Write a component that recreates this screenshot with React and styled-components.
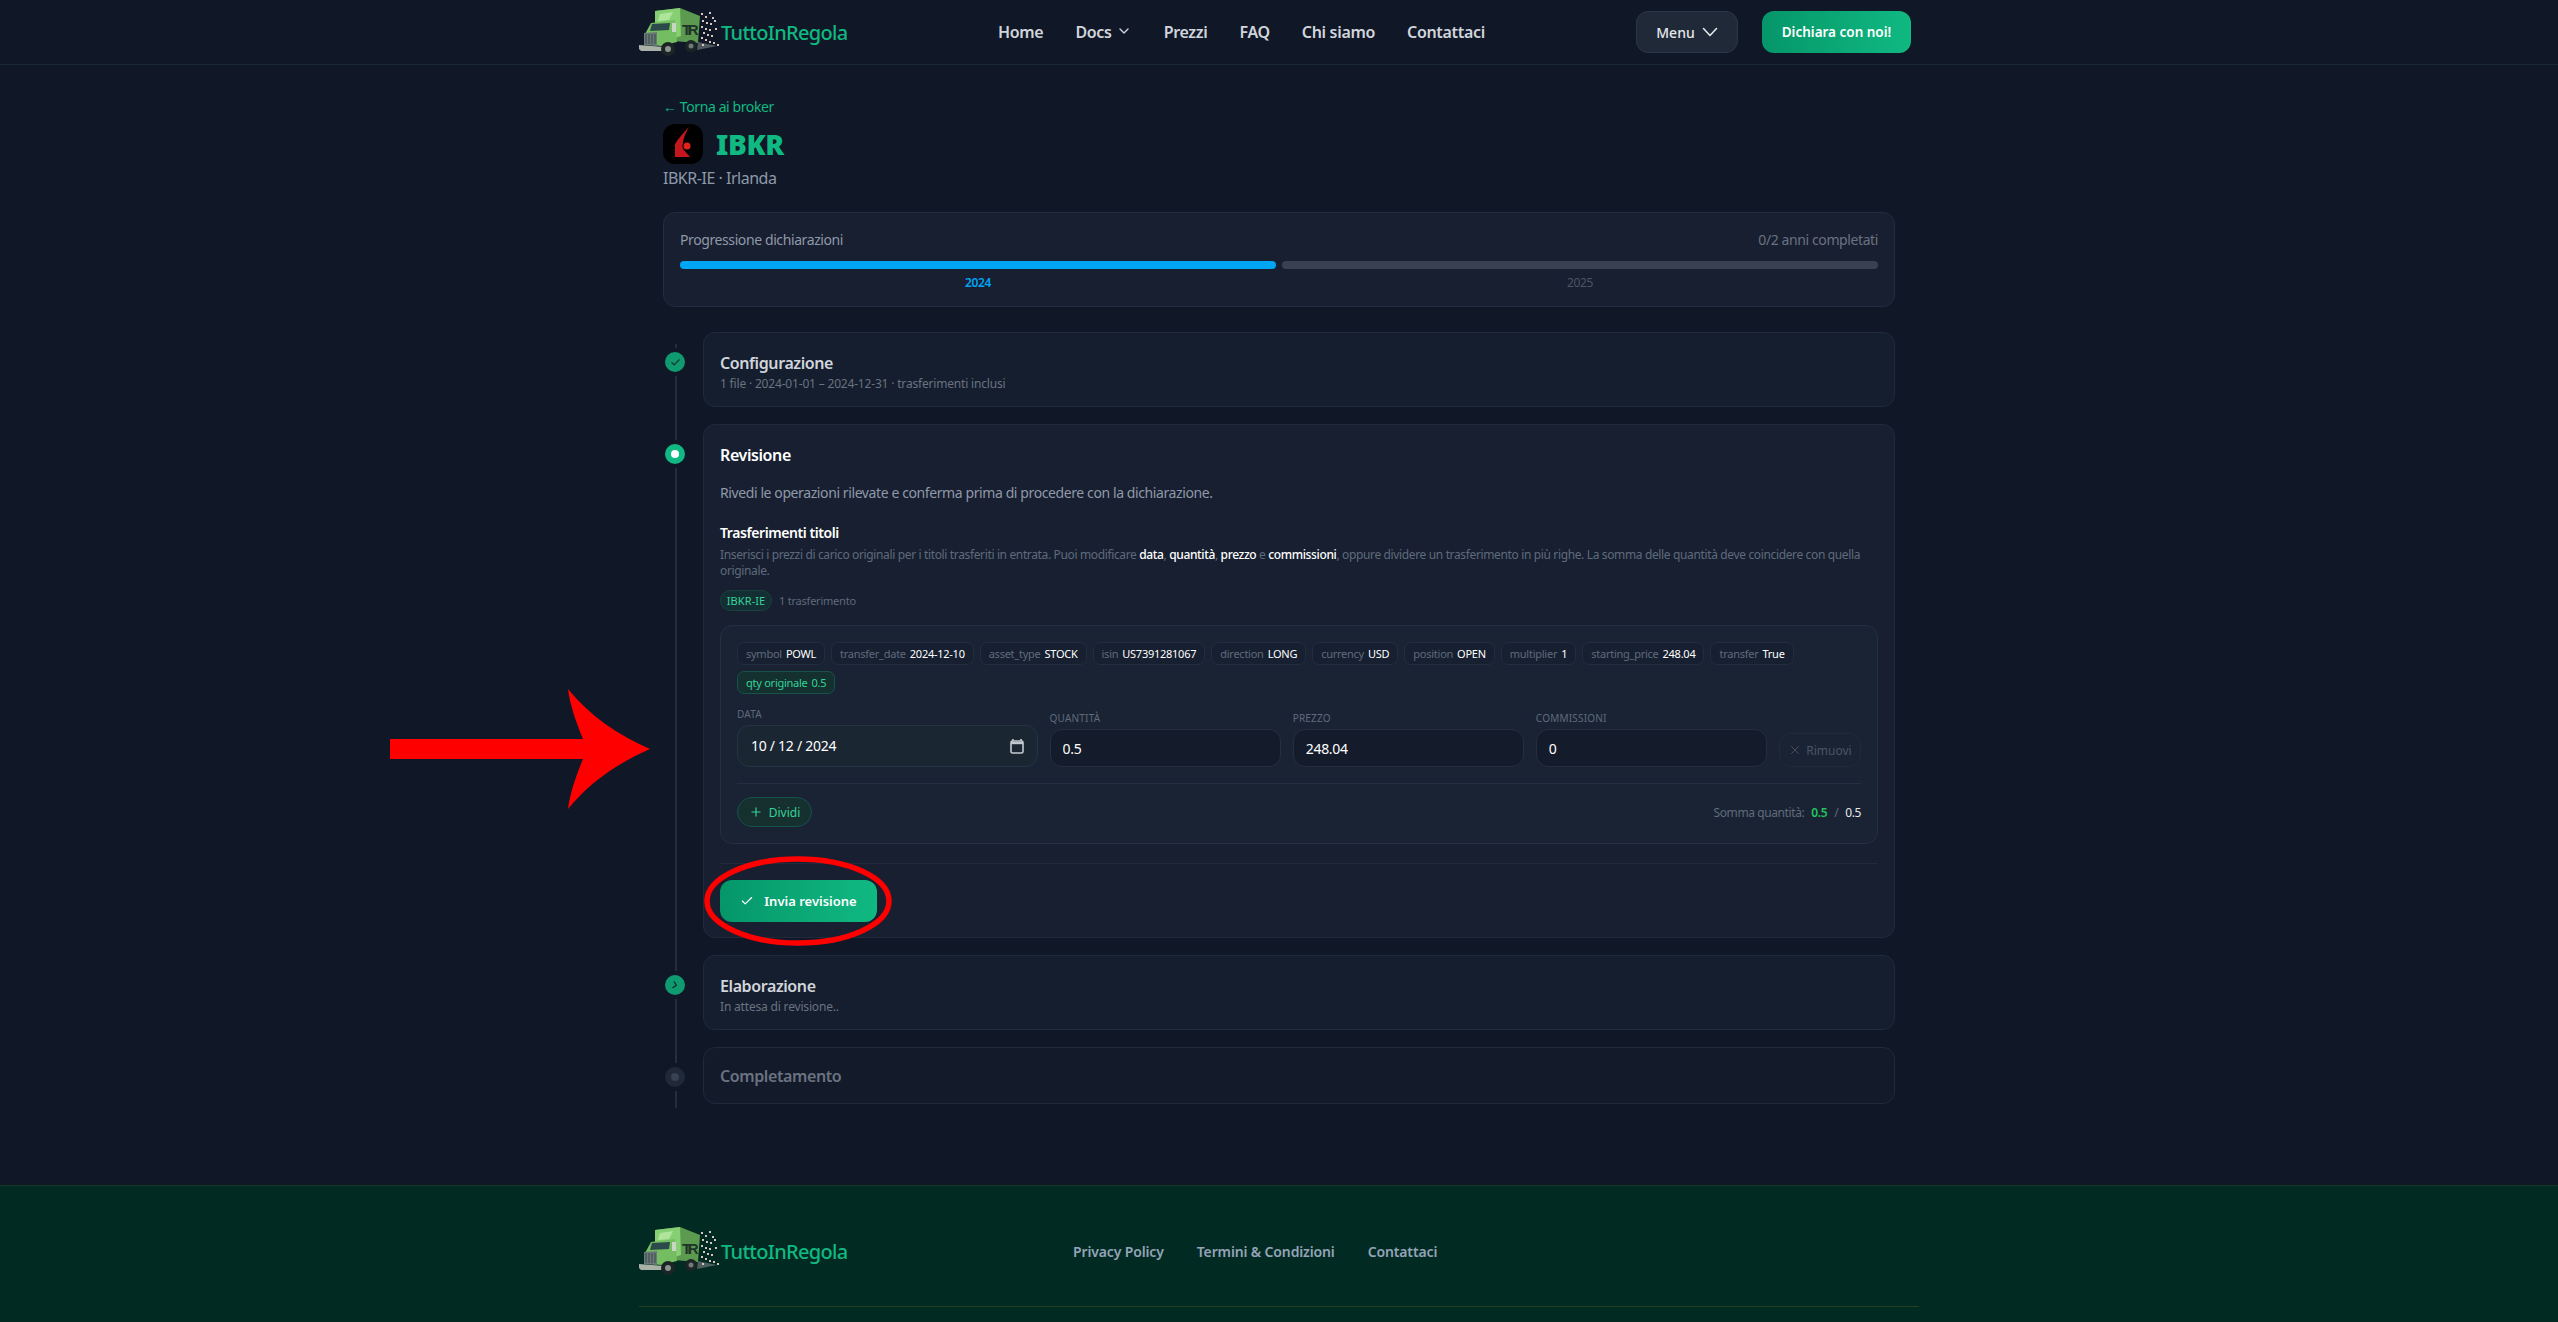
import styled, { createGlobalStyle } from "styled-components";
import { Check, ChevronDown, ChevronRight, Plus, X } from "lucide-react";

const Global = createGlobalStyle`
    * { box-sizing: border-box; }
    html, body { margin: 0; padding: 0; background: #101828; }
    body {
        font-family: "Noto Sans", "Open Sans", sans-serif;
        color: #e5e7eb;
        letter-spacing: -0.025em;
        overflow-x: hidden;
    }
    #root { position: relative; }
`;

const Header = styled.header`
    height: 65px;
    border-bottom: 1px solid #1b2838;
    background: #101828;
`;

const Bar = styled.div`
    width: 1280px;
    height: 64px;
    margin: 0 auto;
    display: flex;
    align-items: center;
    padding-right: 8px;
`;

const LogoLink = styled.a`
    display: flex;
    align-items: center;
    width: 210px;
    font-size: 20px;
    font-weight: 500;
    color: #10b981;
    letter-spacing: -0.035em;

    svg { flex-shrink: 0; }
`;

const Nav = styled.nav`
    display: flex;
    align-items: center;
    gap: 32px;
    margin-left: 149px;
`;

const NavItem = styled.a`
    display: flex;
    align-items: center;
    gap: 4px;
    font-size: 16px;
    font-weight: 600;
    color: #d1d5db;
    letter-spacing: -0.02em;

    svg { margin-top: -3px; }
`;

const Actions = styled.div`
    display: flex;
    gap: 24px;
    margin-left: auto;
`;

const MenuButton = styled.button`
    display: flex;
    align-items: center;
    justify-content: center;
    gap: 7px;
    width: 102px;
    height: 42px;
    font: inherit;
    font-size: 14px;
    font-weight: 500;
    color: #e5e7eb;
    background: #1f2937;
    border: 1px solid #2a3648;
    border-radius: 12px;
`;

const PrimaryButton = styled.button`
    display: flex;
    align-items: center;
    justify-content: center;
    gap: 10px;
    width: ${({ $width = 149 }) => $width}px;
    height: 42px;
    font: inherit;
    font-size: ${({ $size = 13.5 }) => $size}px;
    font-weight: 600;
    color: #fff;
    background: linear-gradient(90deg, #059669, #10b981);
    border: none;
    border-radius: 12px;
`;

const Main = styled.main`
    width: 1280px;
    margin: 0 auto;
    padding: 32px 24px 81px;
`;

const BackLink = styled.a`
    display: block;
    font-size: 14px;
    line-height: 20px;
    color: #10b981;
`;

const Title = styled.div`
    display: flex;
    align-items: center;
    gap: 13px;
    margin-top: 7px;
`;

const BrokerName = styled.h1`
    margin: 0;
    font-size: 28px;
    line-height: 40px;
    font-weight: 900;
    color: #10b981;
`;

const SubTitle = styled.p`
    margin: 4px 0 0;
    font-size: 16px;
    line-height: 20px;
    letter-spacing: -0.03em;
    color: #8f99a8;
`;

const ProgressCard = styled.section`
    height: 95px;
    margin-top: 24px;
    padding: 17px 16px 0;
    background: #171f30;
    border: 1px solid #222d3f;
    border-radius: 12px;
`;

const ProgressHead = styled.div`
    display: flex;
    justify-content: space-between;
    font-size: 14px;
    line-height: 20px;
    color: #8f99a8;
`;

const Faint = styled.span`
    color: #6b7280;
`;

const Years = styled.div`
    display: grid;
    grid-template-columns: 1fr 1fr;
    gap: 6px;
    margin-top: 11px;
`;

const Year = styled.div`
    text-align: center;
    font-size: 12px;
    line-height: 16px;
    font-weight: ${({ $active }) => ($active ? 600 : 400)};
    color: ${({ $active }) => ($active ? "#00a6f4" : "#4b5563")};

    &::before {
        content: "";
        display: block;
        height: 8px;
        margin-bottom: 6px;
        border-radius: 4px;
        background: ${({ $active }) => ($active ? "#00a6f4" : "#374151")};
    }
`;

const Steps = styled.div`
    position: relative;
    display: flex;
    flex-direction: column;
    gap: 17px;
    margin-top: 25px;

    &::before {
        content: "";
        position: absolute;
        top: 12px;
        bottom: -4px;
        left: 12px;
        width: 2px;
        background: #232e3f;
    }
`;

const Step = styled.div`
    position: relative;
    display: grid;
    grid-template-columns: 40px 1fr;
`;

const Dot = styled.div`
    width: 20px;
    height: 20px;
    margin: 20px 0 0 2px;
    display: flex;
    align-items: center;
    justify-content: center;
    border-radius: 50%;
    background: ${({ $state }) => ({ done: "#0f9a70", active: "#10b981", idle: "#1f2937" }[$state])};
    color: #14302f;
    box-shadow: 0 0 0 4px #101828;
`;

const DotCore = styled.span`
    width: 8px;
    height: 8px;
    border-radius: 50%;
    background: ${({ $state }) => ($state === "active" ? "#fff" : "#374151")};
`;

const StepCard = styled.section`
    padding: ${({ $pad = "18px 16px 13px" }) => $pad};
    background: ${({ $state }) => ({ active: "#171f30", idle: "#131b2b" }[$state] || "#141e2e")};
    border: 1px solid #1f2a3b;
    border-radius: 12px;
`;

const StepTitle = styled.h2`
    margin: 0;
    font-size: 16px;
    line-height: 24px;
    font-weight: 600;
    color: ${({ $state }) => ({ active: "#fff", idle: "#6b7280" }[$state] || "#d1d5db")};
`;

const StepNote = styled.p`
    margin: 0;
    font-size: 12px;
    line-height: 18px;
    letter-spacing: -0.015em;
    color: #6b7280;
`;

const Lead = styled.p`
    margin: 16px 0 0;
    font-size: 14px;
    line-height: 20px;
    color: #8f99a8;
`;

const SectionTitle = styled.h3`
    margin: 20px 0 0;
    font-size: 14px;
    line-height: 20px;
    font-weight: 600;
    letter-spacing: -0.03em;
    color: #fff;
`;

const Help = styled.p`
    margin: 4px 0 0;
    font-size: 12px;
    line-height: 16px;
    letter-spacing: -0.03em;
    color: #5f6b7c;

    strong {
        font-weight: 500;
        color: #fff;
    }
`;

const BrokerRow = styled.div`
    display: flex;
    align-items: center;
    gap: 7px;
    margin-top: 11px;
    font-size: 11px;
    letter-spacing: -0.02em;
    color: #5f6b7c;
`;

const BrokerPill = styled.span`
    display: flex;
    align-items: center;
    justify-content: center;
    width: 52px;
    height: 21px;
    font-size: 11px;
    letter-spacing: 0.01em;
    color: #34d399;
    background: #132f33;
    border: 1px solid #17433f;
    border-radius: 11px;
`;

const TransferCard = styled.div`
    margin-top: 14px;
    padding: 16px;
    background: #192333;
    border: 1px solid #243041;
    border-radius: 12px;
`;

const Chips = styled.div`
    display: flex;
    flex-wrap: wrap;
    gap: 6px;
`;

const Chip = styled.span`
    display: flex;
    align-items: center;
    gap: 4px;
    height: 23px;
    padding: 0 8px;
    font-size: 11px;
    letter-spacing: -0.023em;
    color: ${({ $accent }) => ($accent ? "#34d399" : "#5f6b7c")};
    background: ${({ $accent }) => ($accent ? "#14302f" : "#172030")};
    border: 1px solid ${({ $accent }) => ($accent ? "#17524a" : "#222d3f")};
    border-radius: 7px;

    b {
        font-weight: 400;
        color: ${({ $accent }) => ($accent ? "#34d399" : "#fff")};
    }
`;

const Fields = styled.div`
    display: grid;
    grid-template-columns: 1.3fr 1fr 1fr 1fr auto;
    gap: 12px;
    align-items: end;
    margin-top: 13px;
    padding-bottom: 16px;
    border-bottom: 1px solid #243041;
`;

const Field = styled.label`
    display: flex;
    flex-direction: column;
    gap: 4px;
    font-size: 10px;
    line-height: 14px;
    letter-spacing: 0.02em;
    color: #5f6b7c;
`;

const Input = styled.input`
    width: 100%;
    height: 38px;
    padding: 0 12px;
    font: inherit;
    font-size: 14px;
    letter-spacing: -0.02em;
    color: #fff;
    background: #141b2b;
    border: 1px solid #243041;
    border-radius: 12px;
    outline: none;
`;

const DateBox = styled.div`
    display: flex;
    align-items: center;
    justify-content: space-between;
    height: 42px;
    padding: 0 13px;
    font-size: 14px;
    letter-spacing: -0.02em;
    color: #fff;
    background: #1b2633;
    border: 1px solid #263344;
    border-radius: 12px;
`;

const RemoveButton = styled.button`
    display: flex;
    align-items: center;
    justify-content: center;
    gap: 4px;
    width: 82px;
    height: 34px;
    font: inherit;
    font-size: 12px;
    color: #4b5563;
    background: transparent;
    border: 1px solid #1f2a3a;
    border-radius: 12px;
`;

const TransferFoot = styled.div`
    display: flex;
    align-items: center;
    justify-content: space-between;
    margin-top: 13px;
`;

const SplitButton = styled.button`
    display: flex;
    align-items: center;
    justify-content: center;
    gap: 6px;
    width: 75px;
    height: 30px;
    font: inherit;
    font-size: 12px;
    color: #34d399;
    background: #16302f;
    border: 1px solid #17524a;
    border-radius: 15px;
`;

const Sum = styled.div`
    display: flex;
    gap: 7px;
    font-size: 12px;
    color: #5f6b7c;
`;

const SumValue = styled.span`
    font-weight: ${({ $ok }) => ($ok ? 600 : 400)};
    color: ${({ $ok }) => ($ok ? "#22c55e" : "#e5e7eb")};
`;

const Submit = styled.div`
    margin-top: 19px;
    padding-top: 16px;
    border-top: 1px solid #1f2a3b;
`;

const WorkIcon = styled(ChevronRight)`
    transform: rotate(12deg);
`;

const Footer = styled.footer`
    height: 137px;
    background: #012b22;
    border-top: 1px solid #123a26;
`;

const FooterInner = styled.div`
    width: 1280px;
    margin: 0 auto;
    padding-top: 40px;
`;

const FooterRow = styled.div`
    display: flex;
    align-items: center;
    height: 50px;
    margin-bottom: 30px;
`;

const FooterLinks = styled.div`
    display: flex;
    gap: 33px;
    margin-left: 224px;
`;

const FooterLink = styled.a`
    font-size: 14px;
    font-weight: 600;
    letter-spacing: -0.01em;
    color: #94a3b8;
`;

const FooterRule = styled.div`
    height: 1px;
    background: #24401f;
`;

const Mark = styled.svg`
    position: absolute;
    left: 0;
    top: 0;
    pointer-events: none;
`;

const chips = [
    ["symbol", "POWL"],
    ["transfer_date", "2024-12-10"],
    ["asset_type", "STOCK"],
    ["isin", "US7391281067"],
    ["direction", "LONG"],
    ["currency", "USD"],
    ["position", "OPEN"],
    ["multiplier", "1"],
    ["starting_price", "248.04"],
    ["transfer", "True"],
];

const specks = [
    [62, 5], [66, 8], [70, 4], [73, 9], [63, 12], [67, 14], [71, 15], [75, 12], [62, 18], [66, 20],
    [70, 21], [64, 24], [68, 26], [72, 27], [76, 20], [62, 29], [66, 31], [70, 33], [74, 34], [78, 36], [63, 36],
];

function Truck() {
    return (
        <svg width="82" height="48" viewBox="0 0 82 48">
            <path d="M16 3 41 0 61 8 59 35 34 33 16 20Z" fill="#5c9a50" />
            <path d="M16 3 41 0 42 28 33 31 16 20Z" fill="#86cf72" />
            <path d="M21 6 34 4 30 12 19 13Z" fill="#aee59b" />
            <text x="43" y="27" fontFamily="Liberation Sans, sans-serif" fontWeight="700" fontSize="15" fill="#1e3528" textLength="16">TIR</text>
            <path d="M12 15 36 12 38 34 22 38 6 36 6 26Z" fill="#74bd60" />
            <path d="M13 16 31 15 30 22 11 23Z" fill="#2c4a4c" />
            <rect x="33" y="15" width="4" height="9" fill="#c9d6c4" />
            <path d="M5 25 18 24 18 38 5 37Z" fill="#6b7a78" />
            <path d="M7 26V36M10 26V36M13 26V36M16 26V36" stroke="#39474a" strokeWidth="1" />
            <path d="M0 37 26 39 26 43 2 43 0 41Z" fill="#aab2a8" />
            <circle cx="29" cy="41" r="7" fill="#1d2426" />
            <circle cx="29" cy="41" r="3" fill="#8a948f" />
            <circle cx="52" cy="38" r="6" fill="#1d2426" />
            <circle cx="52" cy="38" r="2.5" fill="#6f7975" />
            <path d="M59 34 78 38 58 42Z" fill="#6d7678" opacity=".7" />
            {specks.map(([x, y]) => (
                <rect key={`${x}-${y}`} x={x} y={y} width="2" height="2" fill="#d8c6bd" />
            ))}
        </svg>
    );
}

function Logo() {
    return (
        <LogoLink>
            <Truck />
            <span>TuttoInRegola</span>
        </LogoLink>
    );
}

export default function App() {
    return (
        <>
            <Global />
            <Header>
                <Bar>
                    <Logo />
                    <Nav>
                        <NavItem>Home</NavItem>
                        <NavItem>Docs <ChevronDown size={16} strokeWidth={2} /></NavItem>
                        <NavItem>Prezzi</NavItem>
                        <NavItem>FAQ</NavItem>
                        <NavItem>Chi siamo</NavItem>
                        <NavItem>Contattaci</NavItem>
                    </Nav>
                    <Actions>
                        <MenuButton>
                            Menu
                            <svg width="16" height="10" viewBox="0 0 16 10" fill="none" stroke="currentColor" strokeWidth="1.6" strokeLinecap="round" strokeLinejoin="round">
                                <path d="M1.5 1.5 8 8.5l6.5-7" />
                            </svg>
                        </MenuButton>
                        <PrimaryButton>Dichiara con noi!</PrimaryButton>
                    </Actions>
                </Bar>
            </Header>

            <Main>
                <BackLink>← Torna ai broker</BackLink>
                <Title>
                    <svg width="40" height="40" viewBox="0 0 40 40">
                        <rect width="40" height="40" rx="12" fill="#000" />
                        <path d="M26 3C20 9 15 15 12 20V33H27L20 25C19 17 22 10 26 3Z" fill="#c4161c" />
                        <circle cx="24" cy="22" r="4.5" fill="#000" />
                        <circle cx="24" cy="22" r="3.5" fill="#e2231a" />
                    </svg>
                    <BrokerName>IBKR</BrokerName>
                </Title>
                <SubTitle>IBKR-IE · Irlanda</SubTitle>

                <ProgressCard>
                    <ProgressHead>
                        <span>Progressione dichiarazioni</span>
                        <Faint>0/2 anni completati</Faint>
                    </ProgressHead>
                    <Years>
                        <Year $active>2024</Year>
                        <Year>2025</Year>
                    </Years>
                </ProgressCard>

                <Steps>
                    <Step>
                        <Dot $state="done"><Check size={11} strokeWidth={2.5} /></Dot>
                        <StepCard $state="done">
                            <StepTitle>Configurazione</StepTitle>
                            <StepNote>1 file · 2024-01-01 – 2024-12-31 · trasferimenti inclusi</StepNote>
                        </StepCard>
                    </Step>

                    <Step>
                        <Dot $state="active"><DotCore $state="active" /></Dot>
                        <StepCard $state="active" $pad="18px 16px 15px">
                            <StepTitle $state="active">Revisione</StepTitle>
                            <Lead>Rivedi le operazioni rilevate e conferma prima di procedere con la dichiarazione.</Lead>
                            <SectionTitle>Trasferimenti titoli</SectionTitle>
                            <Help>
                                Inserisci i prezzi di carico originali per i titoli trasferiti in entrata. Puoi modificare <strong>data</strong>, <strong>quantità</strong>, <strong>prezzo</strong> e <strong>commissioni</strong>, oppure dividere un trasferimento in più righe. La somma delle quantità deve coincidere con quella<br />originale.
                            </Help>
                            <BrokerRow>
                                <BrokerPill>IBKR-IE</BrokerPill>
                                <span>1 trasferimento</span>
                            </BrokerRow>
                            <TransferCard>
                                <Chips>
                                    {chips.map(([label, value]) => (
                                        <Chip key={label}>{label} <b>{value}</b></Chip>
                                    ))}
                                    <Chip $accent>qty originale <b>0.5</b></Chip>
                                </Chips>
                                <Fields>
                                    <Field>
                                        DATA
                                        <DateBox>
                                            10 / 12 / 2024
                                            <svg width="14" height="16" viewBox="0 0 14 16">
                                                <path d="M3 1V3M11 1V3" stroke="#c4c9d0" strokeWidth="1.6" />
                                                <rect x="1" y="3" width="12" height="12" rx="1.5" fill="none" stroke="#c4c9d0" strokeWidth="1.6" />
                                                <path d="M1 5H13" stroke="#c4c9d0" strokeWidth="2.4" />
                                            </svg>
                                        </DateBox>
                                    </Field>
                                    <Field>QUANTITÀ<Input readOnly value="0.5" /></Field>
                                    <Field>PREZZO<Input readOnly value="248.04" /></Field>
                                    <Field>COMMISSIONI<Input readOnly value="0" /></Field>
                                    <RemoveButton><X size={14} strokeWidth={1.5} /> Rimuovi</RemoveButton>
                                </Fields>
                                <TransferFoot>
                                    <SplitButton><Plus size={14} /> Dividi</SplitButton>
                                    <Sum>
                                        Somma quantità:
                                        <SumValue $ok>0.5</SumValue>
                                        <span>/</span>
                                        <SumValue>0.5</SumValue>
                                    </Sum>
                                </TransferFoot>
                            </TransferCard>
                            <Submit>
                                <PrimaryButton $width={157} $size={13}><Check size={14} /> Invia revisione</PrimaryButton>
                            </Submit>
                        </StepCard>
                    </Step>

                    <Step>
                        <Dot $state="done"><WorkIcon size={12} strokeWidth={2.5} /></Dot>
                        <StepCard $state="done">
                            <StepTitle>Elaborazione</StepTitle>
                            <StepNote>In attesa di revisione..</StepNote>
                        </StepCard>
                    </Step>

                    <Step>
                        <Dot $state="idle"><DotCore /></Dot>
                        <StepCard $state="idle" $pad="16px 16px 15px">
                            <StepTitle $state="idle">Completamento</StepTitle>
                        </StepCard>
                    </Step>
                </Steps>
            </Main>

            <Footer>
                <FooterInner>
                    <FooterRow>
                        <Logo />
                        <FooterLinks>
                            <FooterLink>Privacy Policy</FooterLink>
                            <FooterLink>Termini &amp; Condizioni</FooterLink>
                            <FooterLink>Contattaci</FooterLink>
                        </FooterLinks>
                    </FooterRow>
                    <FooterRule />
                </FooterInner>
            </Footer>

            {/* annotation marks drawn on top of the screenshot */}
            <Mark width="2558" height="1322" viewBox="0 0 2558 1322">
                <path d="M390 739H583C576 722 570 705 568 689C590 716 618 735 650 749C618 763 590 782 568 809C570 793 576 776 583 759H390Z" fill="#ff0000" />
                <ellipse cx="798" cy="901" rx="91" ry="42" fill="none" stroke="#ff0000" strokeWidth="5.5" />
            </Mark>
        </>
    );
}
